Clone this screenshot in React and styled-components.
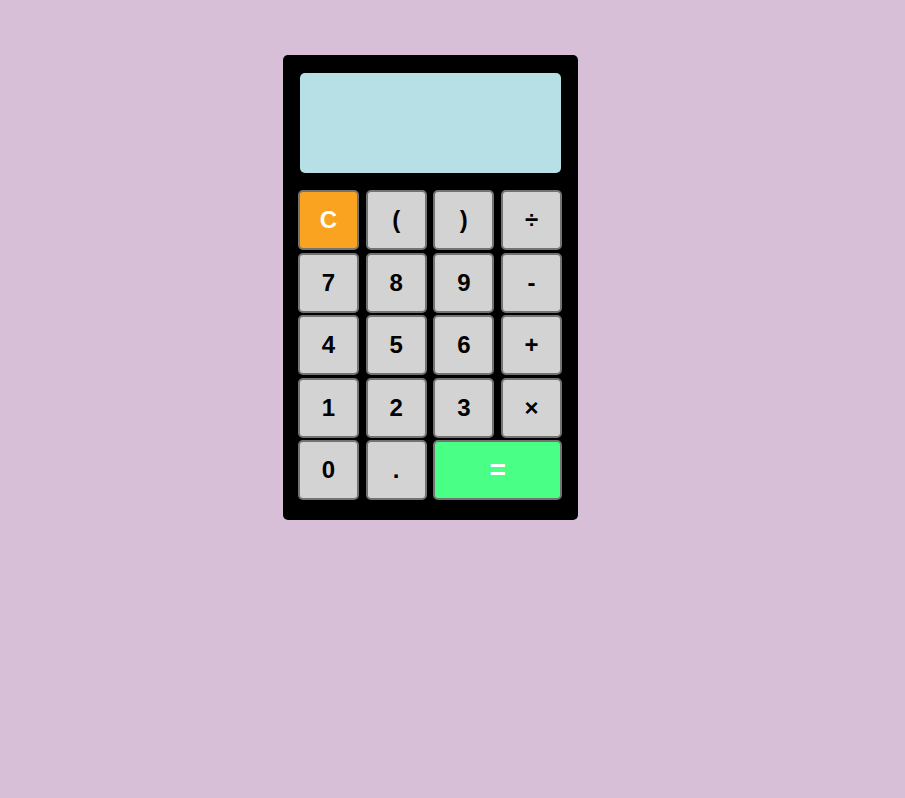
import React from "react";
import styled, { createGlobalStyle } from "styled-components";

const GlobalStyle = createGlobalStyle`
  html, body {
    margin: 0;
    background: #d8bfd8;
    font-family: "Liberation Sans", Arial, sans-serif;
  }
`;

const Page = styled.div`
  min-height: 798px;
  padding: 55px 0 0 283px;
  box-sizing: border-box;
`;

const Body = styled.div`
  width: 295px;
  box-sizing: border-box;
  background: #000;
  border-radius: 5px;
  padding: 18px 15px 20px 15px;
`;

const Display = styled.div`
  height: 100px;
  margin: 0 2px 17px 2px;
  background: #b6e0e6;
  border-radius: 5px;
`;

const Keys = styled.div`
  display: grid;
  grid-template-columns: repeat(4, 61px);
  grid-auto-rows: 60px;
  column-gap: 6.67px;
  row-gap: 2.5px;
`;

const Key = styled.button`
  grid-column: span ${(p) => p.$span || 1};
  box-sizing: border-box;
  border: 2px solid #737373;
  border-radius: 5px;
  background: ${(p) => p.$bg || "#d3d3d3"};
  color: ${(p) => p.$color || "#000"};
  font-family: "Liberation Sans", Arial, sans-serif;
  font-weight: bold;
  font-size: ${(p) => p.$size || 24}px;
  padding: 0;
  cursor: pointer;
`;

const keys = [
  { label: "C", bg: "#f9a320", color: "#fff" },
  { label: "(" },
  { label: ")" },
  { label: "÷" },
  { label: "7" },
  { label: "8" },
  { label: "9" },
  { label: "-" },
  { label: "4" },
  { label: "5" },
  { label: "6" },
  { label: "+" },
  { label: "1" },
  { label: "2" },
  { label: "3" },
  { label: "×" },
  { label: "0" },
  { label: "." },
  { label: "=", bg: "#4aff85", color: "#fff", span: 2, size: 28 },
];

const App = () => {
  return (
    <Page>
      <GlobalStyle />
      <Body>
        <Display />
        <Keys>
          {keys.map((k) => (
            <Key
              key={k.label}
              $bg={k.bg}
              $color={k.color}
              $span={k.span}
              $size={k.size}
            >
              {k.label}
            </Key>
          ))}
        </Keys>
      </Body>
    </Page>
  );
};

export default App;
